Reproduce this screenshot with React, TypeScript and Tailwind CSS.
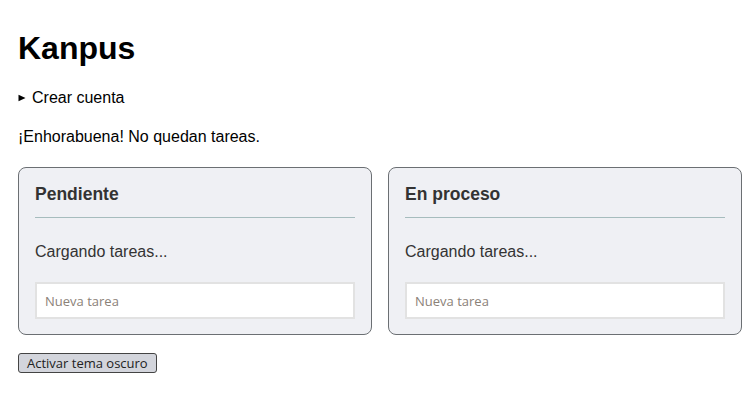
import React from 'react';

const columns = ['Pendiente', 'En proceso'];

const Column = ({ title }: { title: string }) => (
  <div className="flex-1 rounded-lg border border-[#6b6f73] bg-[#eff0f4] px-4 pt-4 pb-[15px] text-[#333]">
    <h2 className="text-[17.5px] font-bold leading-[20px]">{title}</h2>
    <div className="mt-[13px] border-t border-[#a6bcbd]"></div>
    <p className="mt-[25px] text-[16px] leading-[18px]">Cargando tareas...</p>
    <input
      type="text"
      placeholder="Nueva tarea"
      className="mt-[21px] block h-[37px] w-full border-2 border-[#e2e2e2] bg-white px-[8px] font-['Open_Sans',sans-serif] text-[13px] text-[#333] placeholder:text-[#8b8178] outline-none"
    />
  </div>
);

export default function App() {
  return (
    <div className="min-h-[416px] bg-white pl-[18px] pr-[11px] pt-[30px] font-['Liberation_Sans',Arial,sans-serif] text-black">
      <h1 className="text-[32px] font-bold leading-[37px]">Kanpus</h1>
      <details className="mt-[22px] text-[16px] leading-[18px]">
        <summary className="flex cursor-pointer list-none items-center [&::-webkit-details-marker]:hidden">
          <svg width="8" height="8" viewBox="0 0 8 8" className="mr-[6px]">
            <path d="M0.5 0.8 L7.5 4 L0.5 7.2 Z" fill="#000" />
          </svg>
          Crear cuenta
        </summary>
      </details>
      <p className="mt-[21px] text-[16px] leading-[18px]">¡Enhorabuena! No quedan tareas.</p>
      <div className="mt-[21px] flex gap-4">
        {columns.map(c => (
          <Column key={c} title={c} />
        ))}
      </div>
      <button className="mt-[18px] h-[20px] rounded-[3px] border border-[#444] bg-[#d3d5dc] px-[8px] font-['Open_Sans',sans-serif] text-[13px] leading-[16px] text-[#222]">
        Activar tema oscuro
      </button>
    </div>
  );
}
